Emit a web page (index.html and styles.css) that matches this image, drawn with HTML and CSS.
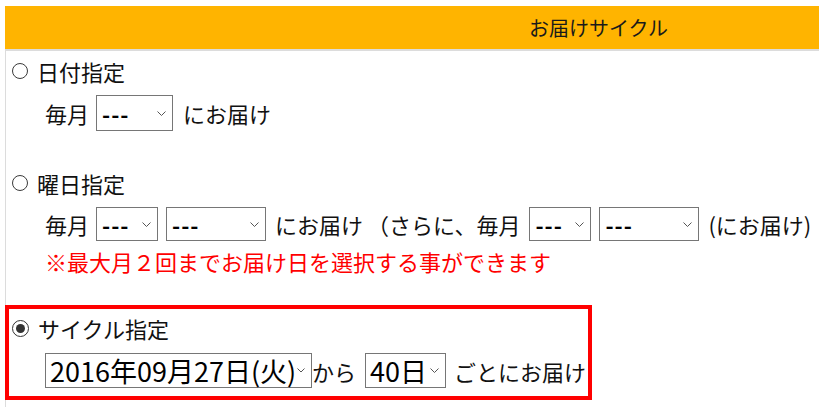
FILE: index.html
```html
<!DOCTYPE html>
<html lang="ja">
<head>
<meta charset="utf-8">
<title>お届けサイクル</title>
<link rel="stylesheet" href="styles.css">
</head>
<body>
<div class="page">
  <div class="head"><span class="head-title">お届けサイクル</span></div>
  <div class="content">
    <div class="opt opt1"><span class="radio"></span><span class="opt-label">日付指定</span></div>
    <div class="row row1">
      <span class="txt lead">毎月</span>
      <span class="sel sel-a"><span class="val dash">---</span><svg class="chev" width="9" height="5" viewBox="0 0 9 5"><polyline points="0.5,0.5 4.5,4.5 8.5,0.5" fill="none" stroke="#555" stroke-width="1"/></svg></span>
      <span class="txt">にお届け</span>
    </div>

    <div class="opt opt2"><span class="radio"></span><span class="opt-label">曜日指定</span></div>
    <div class="row row2">
      <span class="txt lead">毎月</span>
      <span class="sel sel-b gap8"><span class="val dash">---</span><svg class="chev" width="9" height="5" viewBox="0 0 9 5"><polyline points="0.5,0.5 4.5,4.5 8.5,0.5" fill="none" stroke="#555" stroke-width="1"/></svg></span>
      <span class="sel sel-c gap9"><span class="val dash">---</span><svg class="chev" width="9" height="5" viewBox="0 0 9 5"><polyline points="0.5,0.5 4.5,4.5 8.5,0.5" fill="none" stroke="#555" stroke-width="1"/></svg></span>
      <span class="txt gap9">にお届け<span class="paren">（</span>さらに、毎月</span>
      <span class="sel sel-b gap8"><span class="val dash">---</span><svg class="chev" width="9" height="5" viewBox="0 0 9 5"><polyline points="0.5,0.5 4.5,4.5 8.5,0.5" fill="none" stroke="#555" stroke-width="1"/></svg></span>
      <span class="sel sel-c gap9"><span class="val dash">---</span><svg class="chev" width="9" height="5" viewBox="0 0 9 5"><polyline points="0.5,0.5 4.5,4.5 8.5,0.5" fill="none" stroke="#555" stroke-width="1"/></svg></span>
      <span class="txt">(にお届け)</span>
    </div>
    <div class="note">※最大月２回までお届け日を選択する事ができます</div>

    <div class="box">
      <div class="opt opt3"><span class="radio checked"></span><span class="opt-label">サイクル指定</span></div>
      <div class="row row3">
        <span class="sel sel-date"><span class="val big">2016年09月27日(火)</span><svg class="chev" width="8" height="5" viewBox="0 0 8 5"><polyline points="0.5,0.5 4,4 7.5,0.5" fill="none" stroke="#555" stroke-width="1"/></svg></span>
        <span class="txt kara">から</span>
        <span class="sel sel-days"><span class="val big">40日</span><svg class="chev" width="9" height="5" viewBox="0 0 9 5"><polyline points="0.5,0.5 4.5,4.5 8.5,0.5" fill="none" stroke="#555" stroke-width="1"/></svg></span>
        <span class="txt">ごとにお届け</span>
      </div>
    </div>
  </div>
</div>
</body>
</html>
```

FILE: styles.css
```css
html, body {
  margin: 0;
  padding: 0;
  background: #fff;
}

body {
  font-family: "Noto Sans CJK JP", "Noto Sans", sans-serif;
  color: #111;
  font-size: 22px;
  overflow: hidden;
}

.page {
  margin: 6px 0 0 5px;
}

.head {
  height: 43px;
  background: #ffb400;
  border-bottom: 2px solid #dcdcdc;
  display: flex;
  align-items: center;
  padding-left: 524px;
}

.head-title {
  font-size: 20px;
  line-height: 1;
  color: #1a1a1a;
  white-space: nowrap;
}

.content {
  border-left: 1px solid #dcdcdc;
  padding-bottom: 20px;
}

.opt {
  display: flex;
  align-items: center;
  height: 40px;
  padding-left: 6px;
}

.opt2 {
  margin-top: 28px;
}

.opt3 {
  height: 38px;
  padding-left: 3px;
}

.radio {
  width: 14px;
  height: 14px;
  border: 1px solid #3a3a3a;
  border-radius: 50%;
  box-sizing: content-box;
  margin-right: 9px;
  flex: none;
  display: flex;
  align-items: center;
  justify-content: center;
}

.radio.checked {
  width: 15px;
  height: 15px;
  border: 1px solid #333;
}

.radio.checked::after {
  content: "";
  width: 9px;
  height: 9px;
  border-radius: 50%;
  background: #333;
}

.opt-label {
  line-height: 1;
  white-space: nowrap;
}

.row {
  display: flex;
  align-items: center;
  padding-left: 39px;
  white-space: nowrap;
}

.row1 {
  height: 44px;
}

.row2 {
  height: 42px;
}

.txt {
  line-height: 1;
}

.paren {
  margin-left: 4px;
}

.lead {
  margin-right: 7px;
}

.sel {
  display: flex;
  align-items: center;
  justify-content: space-between;
  border: 1px solid #767676;
  background: #fff;
  box-sizing: border-box;
  padding: 0 6px 0 5px;
  flex: none;
}

.sel-a {
  width: 77px;
  height: 36px;
  margin-right: 10px;
}

.sel-b {
  width: 62px;
  height: 34px;
}

.sel-c {
  width: 100px;
  height: 34px;
}

.gap7 {
  margin-right: 7px;
}

.gap8 {
  margin-right: 8px;
}

.gap9 {
  margin-right: 9px;
}

.val {
  line-height: 1;
  color: #000;
}

.dash {
  font-weight: bold;
  letter-spacing: 1px;
}

.chev {
  display: block;
  flex: none;
}

.note {
  color: #ff0000;
  height: 32px;
  line-height: 32px;
  padding-left: 39px;
  white-space: nowrap;
}

.box {
  margin: 28px 0 0 -1px;
  width: 587px;
  box-sizing: border-box;
  border: 4px solid #ff0000;
  padding-bottom: 2px;
}

.row3 {
  height: 47px;
  padding-left: 36px;
}

.sel-date {
  width: 267px;
  height: 35px;
  padding: 0 6px 0 4px;
}

.sel-days {
  width: 81px;
  height: 35px;
  padding: 0 6px 0 4px;
  margin-right: 8px;
}

.big {
  font-size: 27px;
}

.kara {
  margin-right: 9px;
}
```
